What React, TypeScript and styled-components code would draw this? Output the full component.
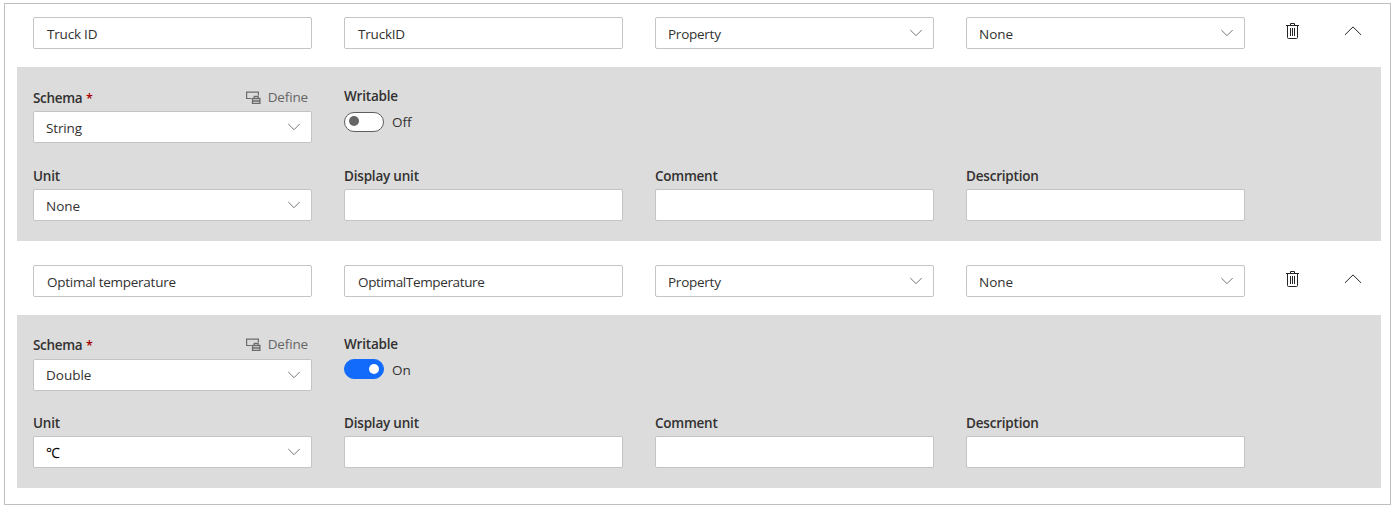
import React from "react";
import styled, { createGlobalStyle } from "styled-components";

const GlobalStyle = createGlobalStyle`
  * { box-sizing: border-box; }
  body {
    margin: 0;
    background: #fff;
    color: #323130;
    font-family: "Open Sans", "Noto Sans", sans-serif;
    font-size: 13.5px;
    line-height: 20px;
  }
`;

const Frame = styled.main`
  width: 1387px;
  height: 502px;
  margin: 3px 0 0 4px;
  padding: 0 9px 0 12px;
  border: 1px solid #bfbfbf;
`;

const HeaderRow = styled.div<{ $top: number }>`
  display: grid;
  grid-template-columns: repeat(4, 279px) 31px 26px;
  column-gap: 32px;
  padding: ${(p) => p.$top}px 0 18px 16px;
`;

const Panel = styled.section<{ $height: number }>`
  height: ${(p) => p.$height}px;
  padding: 19px 16px 0;
  background: #dcdcdc;
`;

const FieldRow = styled.div<{ $height?: number }>`
  display: grid;
  grid-template-columns: repeat(4, 279px);
  column-gap: 32px;
  height: ${(p) => (p.$height ? `${p.$height}px` : "auto")};
`;

const LabelLine = styled.div<{ $height: number; $top?: number }>`
  display: flex;
  justify-content: space-between;
  height: ${(p) => p.$height}px;
  padding-top: ${(p) => p.$top ?? 0}px;
`;

const Label = styled.span<{ $spacing?: number }>`
  font-weight: 600;
  letter-spacing: ${(p) => p.$spacing ?? 0}px;
  white-space: nowrap;
`;

const Required = styled.span`
  margin-left: 0.5px;
  font-size: 12.5px;
  color: #a80000;
`;

const Define = styled.span`
  display: flex;
  margin: -1px 4px 0 0;
  gap: 7px;
  letter-spacing: -0.15px;
  color: #666;
`;

const Box = styled.div<{ $inset: number; $top?: number }>`
  display: flex;
  align-items: center;
  justify-content: space-between;
  height: 32px;
  padding: ${(p) => p.$top ?? 2}px 11px 0 ${(p) => p.$inset}px;
  border: 1px solid #c4c4c4;
  border-radius: 2px;
  background: #fff;
`;

const Value = styled.span<{ $spacing?: number; $dark?: boolean }>`
  letter-spacing: ${(p) => p.$spacing ?? 0}px;
  color: ${(p) => (p.$dark ? "#000" : "inherit")};
  font-size: ${(p) => (p.$dark ? 14 : 13.5)}px;
  white-space: nowrap;
`;

const Chevron = styled.svg<{ $top: number }>`
  margin-top: ${(p) => p.$top}px;
`;

const Action = styled.span`
  display: flex;
  justify-content: center;
`;

const ToggleLine = styled.div`
  display: flex;
  gap: 8px;
`;

const Track = styled.span<{ $on: boolean }>`
  display: flex;
  align-items: center;
  justify-content: ${(p) => (p.$on ? "flex-end" : "flex-start")};
  width: 40px;
  height: 20px;
  padding: 0 4px;
  border: 1px solid ${(p) => (p.$on ? "#136bfb" : "#605e5c")};
  border-radius: 10px;
  background: ${(p) => (p.$on ? "#136bfb" : "#fff")};
`;

const Knob = styled.span<{ $on: boolean }>`
  width: 10px;
  height: 10px;
  margin-top: ${(p) => (p.$on ? 0 : -2)}px;
  border-radius: 50%;
  background: ${(p) => (p.$on ? "#fff" : "#666")};
`;

const ToggleText = styled.span<{ $top: number }>`
  padding-top: ${(p) => p.$top}px;
`;

const spacings: Record<string, number> = {
  "Truck ID": -0.2,
  TruckID: -0.2,
  Property: -0.25,
  String: -0.15,
  "Optimal temperature": -0.27,
  OptimalTemperature: -0.36,
  "Display unit": -0.2,
  Comment: -0.25,
  Description: -0.2,
};

function Select({ value, raised = false }: { value: string; raised?: boolean }) {
  return (
    <Box $inset={12} $top={raised ? 0 : 2}>
      <Value $spacing={spacings[value]} $dark={value === "℃"}>{value}</Value>
      <Chevron $top={raised ? -1 : -3} width="12" height="8" viewBox="0 0 12 8" fill="none" stroke="#767676">
        <path d="M.3 1 6 6.7 11.7 1" />
      </Chevron>
    </Box>
  );
}

function Input({ value }: { value?: string }) {
  return (
    <Box $inset={13}>
      {value && <Value $spacing={spacings[value]}>{value}</Value>}
    </Box>
  );
}

const DefineGlyph = styled.svg`
  margin-top: 4px;
`;

const TrashGlyph = styled.svg`
  margin-top: 6px;
`;

const CollapseGlyph = styled.svg`
  margin-top: 9px;
`;

function DefineIcon() {
  return (
    <DefineGlyph width="15" height="13" viewBox="0 0 15 13" fill="none" stroke="#6b6b6b">
      <path d="M5.5 7.5H.6V1.1h11.8v3.4" strokeWidth="1.2" />
      <path d="M6.5 7.5h7.4v4.9H6.5zM6.5 10h7.4M8.3 7.5V5.4h3.8v2.1" strokeWidth="1.3" />
    </DefineGlyph>
  );
}

interface Item {
  name: string;
  id: string;
  schema: string;
  unit: string;
  writable: boolean;
  top: number;
  height: number;
  shift: number;
}

const items: Item[] = [
  { name: "Truck ID", id: "TruckID", schema: "String", unit: "None", writable: false, top: 13, height: 174, shift: 1 },
  { name: "Optimal temperature", id: "OptimalTemperature", schema: "Double", unit: "℃", writable: true, top: 24, height: 173, shift: 0 },
];

function Capability({ item }: { item: Item }) {
  return (
    <>
      <HeaderRow $top={item.top}>
        <Input value={item.name} />
        <Input value={item.id} />
        <Select value="Property" />
        <Select value="None" />
        <Action>
          <TrashGlyph width="13" height="17" viewBox="0 0 13 17" fill="none" stroke="#252423">
            <path d="M0 2.5h13M4.5 2.5v-2h4v2M1.5 2.5v12q0 1 1 1h8q1 0 1-1v-12M4.5 5v8M6.5 5v8M8.5 5v8" />
          </TrashGlyph>
        </Action>
        <Action>
          <CollapseGlyph width="18" height="10" viewBox="0 0 18 10" fill="none" stroke="#252423">
            <path d="M1 8.8 9 .9 17 8.8" />
          </CollapseGlyph>
        </Action>
      </HeaderRow>
      <Panel $height={item.height}>
        <FieldRow $height={78 + item.shift}>
          <div>
            <LabelLine $height={25} $top={1 + item.shift}>
              <Label $spacing={-0.3}>Schema <Required>*</Required></Label>
              <Define>
                <DefineIcon />
                Define
              </Define>
            </LabelLine>
            <Select value={item.schema} raised={item.schema === "Double"} />
          </div>
          <div>
            <LabelLine $height={25 + item.shift}>
              <Label $spacing={-0.2}>Writable</Label>
            </LabelLine>
            <ToggleLine>
              <Track $on={item.writable}><Knob $on={item.writable} /></Track>
              <ToggleText $top={1 - item.shift}>{item.writable ? "On" : "Off"}</ToggleText>
            </ToggleLine>
          </div>
        </FieldRow>
        <FieldRow>
          <div>
            <LabelLine $height={24} $top={1}><Label $spacing={-0.2}>Unit</Label></LabelLine>
            <Select value={item.unit} />
          </div>
          {["Display unit", "Comment", "Description"].map((label) => (
            <div key={label}>
              <LabelLine $height={24} $top={1}><Label $spacing={spacings[label]}>{label}</Label></LabelLine>
              <Input />
            </div>
          ))}
        </FieldRow>
      </Panel>
    </>
  );
}

export default function App() {
  return (
    <>
      <GlobalStyle />
      <Frame>
        {items.map((item) => <Capability key={item.id} item={item} />)}
      </Frame>
    </>
  );
}
